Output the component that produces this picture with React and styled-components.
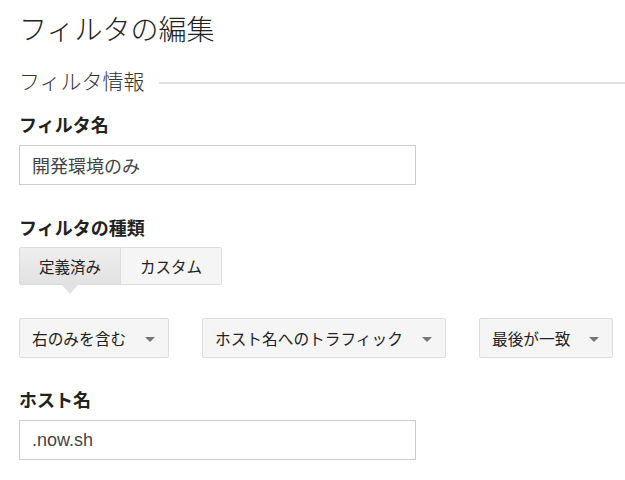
import styled, { createGlobalStyle } from "styled-components"

const Global = createGlobalStyle`
body {
  margin: 0;
  background: #fff;
  font-family: "Noto Sans CJK JP", "Noto Sans", "Liberation Sans", sans-serif;
  color: #222;
}
`

const Page = styled.div`
  padding: 8px 0 0 19px;
`

const Title = styled.h1`
  margin: 0;
  font-size: 28px;
  font-weight: 300;
  line-height: 40px;
  color: #222;
`

const Section = styled.div`
  display: flex;
  align-items: center;
  margin-top: 19px;
`

const SectionText = styled.span`
  font-size: 21px;
  line-height: 26px;
  color: #333;
  font-weight: 300;
`

const Rule = styled.div`
  flex: 1;
  height: 0;
  border-top: 2px solid #e0e0e0;
  margin: 6px 0 0 14px;
`

const Label = styled.div`
  font-size: 18px;
  font-weight: bold;
  line-height: 24px;
  color: #222;
  margin-top: ${(p) => p.top}px;
`

const Input = styled.div`
  box-sizing: border-box;
  width: 397px;
  height: 40px;
  margin-top: ${(p) => p.top}px;
  border: 1px solid #ccc;
  padding: 0 12px;
  display: flex;
  align-items: center;
  font-size: 18px;
  color: #444;
  font-family: ${(p) => (p.latin ? `"Liberation Sans", "Noto Sans CJK JP", sans-serif` : "inherit")};
`

const Toggle = styled.div`
  display: flex;
  margin-top: 8px;
`

const ToggleButton = styled.div`
  position: relative;
  box-sizing: border-box;
  width: ${(p) => p.w}px;
  height: 38px;
  display: flex;
  align-items: center;
  justify-content: center;
  font-size: 15.5px;
  color: #222;
  border: 1px solid #dcdcdc;
  border-left-width: ${(p) => (p.first ? 1 : 0)}px;
  border-radius: ${(p) => (p.first ? "2px 0 0 2px" : "0 2px 2px 0")};
  background: ${(p) => (p.active ? "linear-gradient(#eeeeee, #e2e2e2)" : "#f5f5f5")};
`

const Pointer = styled.span`
  position: absolute;
  left: 50%;
  bottom: -10px;
  margin-left: -9px;
  width: 0;
  height: 0;
  border-left: 9px solid transparent;
  border-right: 9px solid transparent;
  border-top: 10px solid #e2e2e2;
`

const Selects = styled.div`
  display: flex;
  gap: 33px;
  margin-top: 33px;
`

const Select = styled.div`
  box-sizing: border-box;
  width: ${(p) => p.w}px;
  height: 40px;
  display: flex;
  align-items: center;
  justify-content: space-between;
  padding: 0 13px 0 12px;
  font-size: 15.7px;
  color: #222;
  background: #f5f5f5;
  border: 1px solid #dcdcdc;
  border-radius: 2px;
`

const Caret = styled.span`
  width: 0;
  height: 0;
  border-left: 5px solid transparent;
  border-right: 5px solid transparent;
  border-top: 5px solid #777;
  margin-top: 2px;
`

export default function App() {
  return (
    <Page>
      <Global />
      <Title>フィルタの編集</Title>
      <Section>
        <SectionText>フィルタ情報</SectionText>
        <Rule />
      </Section>
      <Label top={19}>フィルタ名</Label>
      <Input top={9}>開発環境のみ</Input>
      <Label top={30}>フィルタの種類</Label>
      <Toggle>
        <ToggleButton first active w={102}>
          定義済み
          <Pointer />
        </ToggleButton>
        <ToggleButton w={101}>カスタム</ToggleButton>
      </Toggle>
      <Selects>
        <Select w={150}>
          右のみを含む
          <Caret />
        </Select>
        <Select w={244}>
          ホスト名へのトラフィック
          <Caret />
        </Select>
        <Select w={134}>
          最後が一致
          <Caret />
        </Select>
      </Selects>
      <Label top={29}>ホスト名</Label>
      <Input top={9} latin>
        .now.sh
      </Input>
    </Page>
  )
}
